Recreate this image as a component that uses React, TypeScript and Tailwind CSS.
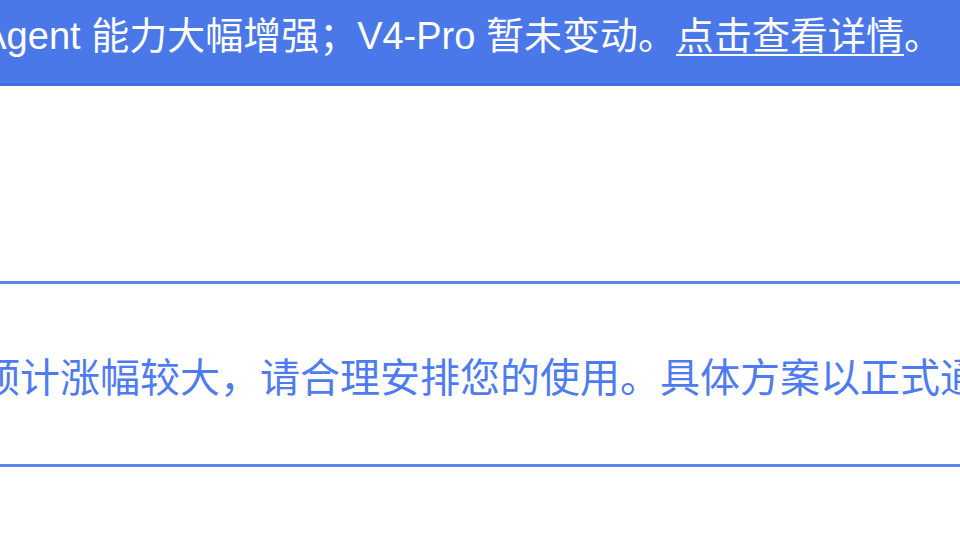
export default function App() {
  return (
    <div
      className="w-[960px] h-[540px] bg-white overflow-hidden"
      style={{ fontFamily: '"Liberation Sans", "Noto Sans CJK SC", sans-serif' }}
    >
      {/* Announcement banner */}
      <div className="h-[86px] bg-[#4a78e9] border-b-[3px] border-[#3f6fe3] flex items-center justify-end pr-[18px] overflow-hidden whitespace-nowrap">
        <p className="text-[38px] text-white leading-none pb-[12px]">
          Agent 能力大幅增强；V4-Pro 暂未变动。
          <span className="underline underline-offset-[5px] decoration-2">点击查看详情</span>。
        </p>
      </div>

      <div className="h-[195px]" />

      {/* Notice strip */}
      <div className="h-[186px] border-y-[3px] border-[#5a85ee] flex items-center overflow-hidden whitespace-nowrap">
        <p className="ml-[-20px] text-[40px] leading-none text-[#4e7cf0] pt-[8px]">
          预计涨幅较大，请合理安排您的使用。具体方案以正式通知为准。
        </p>
      </div>
    </div>
  );
}
